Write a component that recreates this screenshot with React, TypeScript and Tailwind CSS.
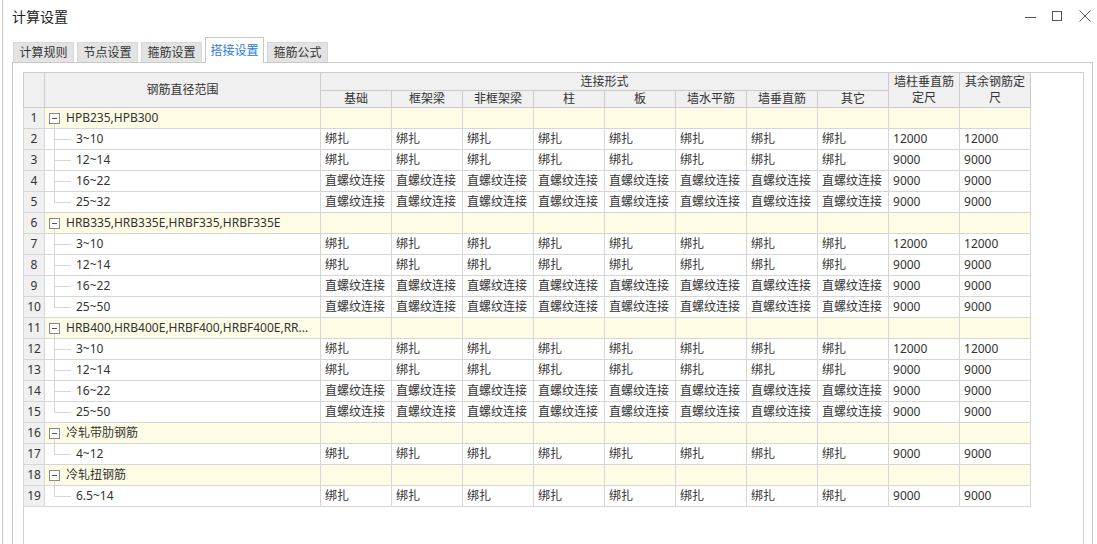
import React from "react";

type Child = { range: string; tie: boolean; a: string; b: string };
type Group = { name: string; children: Child[] };

const groups: Group[] = [
  {
    name: "HPB235,HPB300",
    children: [
      { range: "3~10", tie: true, a: "12000", b: "12000" },
      { range: "12~14", tie: true, a: "9000", b: "9000" },
      { range: "16~22", tie: false, a: "9000", b: "9000" },
      { range: "25~32", tie: false, a: "9000", b: "9000" },
    ],
  },
  {
    name: "HRB335,HRB335E,HRBF335,HRBF335E",
    children: [
      { range: "3~10", tie: true, a: "12000", b: "12000" },
      { range: "12~14", tie: true, a: "9000", b: "9000" },
      { range: "16~22", tie: false, a: "9000", b: "9000" },
      { range: "25~50", tie: false, a: "9000", b: "9000" },
    ],
  },
  {
    name: "HRB400,HRB400E,HRBF400,HRBF400E,RR...",
    children: [
      { range: "3~10", tie: true, a: "12000", b: "12000" },
      { range: "12~14", tie: true, a: "9000", b: "9000" },
      { range: "16~22", tie: false, a: "9000", b: "9000" },
      { range: "25~50", tie: false, a: "9000", b: "9000" },
    ],
  },
  { name: "冷轧带肋钢筋", children: [{ range: "4~12", tie: true, a: "9000", b: "9000" }] },
  { name: "冷轧扭钢筋", children: [{ range: "6.5~14", tie: true, a: "9000", b: "9000" }] },
];

const subCols = ["基础", "框架梁", "非框架梁", "柱", "板", "墙水平筋", "墙垂直筋", "其它"];
const tabs = ["计算规则", "节点设置", "箍筋设置", "搭接设置", "箍筋公式"];

const cell = "border border-[#d6d6d6] px-[4px] text-left font-normal whitespace-nowrap overflow-hidden";
const head = "border border-[#cbcbcb] bg-[#f0f0f0] font-normal text-center leading-[16px] p-0";
const num = "border border-[#d6d6d6] bg-[#f0f0f0] text-center p-0";

export default function App() {
  let n = 0;
  const rows: React.ReactNode[] = [];
  groups.forEach((g, gi) => {
    n++;
    rows.push(
      <tr key={`g${gi}`} className="h-[21px]">
        <td className={num}>{n}</td>
        <td className={`${cell} bg-[#fffce6] relative pl-[21px]`}>
          <span className="absolute left-[4px] top-[5px] w-[11px] h-[11px] border border-[#8a8a8a] bg-white flex items-center justify-center">
            <span className="block w-[5px] h-px bg-[#555]" />
          </span>
          <span className="absolute left-[9px] top-[16px] bottom-0 w-px bg-[#d6d6d6]" />
          {g.name}
        </td>
        {Array.from({ length: 10 }).map((_, i) => (
          <td key={i} className={`${cell} bg-[#fffce6]`} />
        ))}
      </tr>
    );
    g.children.forEach((c, ci) => {
      n++;
      const last = ci === g.children.length - 1;
      rows.push(
        <tr key={`c${gi}-${ci}`} className="h-[21px]">
          <td className={num}>{n}</td>
          <td className={`${cell} relative pl-[31px]`}>
            <span className={`absolute left-[9px] top-0 w-px bg-[#d6d6d6] ${last ? "h-[10px]" : "h-full"}`} />
            <span className="absolute left-[9px] top-[10px] w-[17px] h-px bg-[#d6d6d6]" />
            {c.range}
          </td>
          {subCols.map((s) => (
            <td key={s} className={cell}>
              {c.tie ? "绑扎" : "直螺纹连接"}
            </td>
          ))}
          <td className={cell}>{c.a}</td>
          <td className={cell}>{c.b}</td>
        </tr>
      );
    });
  });

  return (
    <div
      className="w-[1097px] h-[544px] overflow-hidden bg-white text-[#333] relative"
      style={{ fontFamily: '"Noto Sans", "Noto Sans CJK SC", sans-serif' }}
    >
      <div className="ml-[2px] h-full border-l border-[#c9c9c9] flex flex-col">
        {/* title bar */}
        <div className="h-[37px] shrink-0 flex items-start justify-between pl-[9px] pr-[6px]">
          <div className="text-[14px] leading-[20px] mt-[7px] text-[#222]">计算设置</div>
          <div className="flex items-center gap-[16px] mt-[10px]">
            <svg width="11" height="11" viewBox="0 0 11 11">
              <line x1="0" y1="6.5" x2="11" y2="6.5" stroke="#555" strokeWidth="1" />
            </svg>
            <svg width="11" height="11" viewBox="0 0 11 11">
              <rect x="0.5" y="0.5" width="9" height="9" fill="none" stroke="#555" strokeWidth="1" />
            </svg>
            <svg width="12" height="12" viewBox="0 0 12 12">
              <path d="M0.5 0.5 L11.5 11.5 M11.5 0.5 L0.5 11.5" stroke="#555" strokeWidth="1" />
            </svg>
          </div>
        </div>

        {/* tabs */}
        <div className="flex items-end gap-[3px] pl-[10px] h-[25px] shrink-0 relative z-10">
          {tabs.map((t) => {
            const active = t === "搭接设置";
            return (
              <div
                key={t}
                className={
                  active
                    ? "h-[26px] w-[59px] border border-b-0 border-[#c6c6c6] bg-white text-[#2a7ad6] text-[12px] flex items-center justify-center -mb-px pt-[1px]"
                    : "h-[20px] w-[61px] border border-b-0 border-[#d8d8d8] bg-[#e3e3e3] text-[#333] text-[12px] flex items-center justify-center"
                }
              >
                {t}
              </div>
            );
          })}
        </div>

        {/* panel */}
        <div className="ml-[9px] w-[1081px] h-[520px] shrink-0 border border-[#c9c9c9] pt-[9px] pl-[10px] pr-[8px]">
          <div className="h-full border border-[#cfcfcf] border-b-0">
            <table
              className="table-fixed border-collapse text-[12px] leading-[16px] -mt-px -ml-px"
              style={{ width: 1007 }}
            >
              <colgroup>
                <col style={{ width: 21 }} />
                <col style={{ width: 276 }} />
                {Array.from({ length: 10 }).map((_, i) => (
                  <col key={i} style={{ width: 71 }} />
                ))}
              </colgroup>
              <thead>
                <tr className="h-[18px]">
                  <th rowSpan={2} className={head} />
                  <th rowSpan={2} className={head}>钢筋直径范围</th>
                  <th colSpan={8} className={head}>连接形式</th>
                  <th rowSpan={2} className={head}>
                    墙柱垂直筋
                    <br />
                    定尺
                  </th>
                  <th rowSpan={2} className={head}>
                    其余钢筋定
                    <br />
                    尺
                  </th>
                </tr>
                <tr className="h-[17px]">
                  {subCols.map((s) => (
                    <th key={s} className={head}>
                      {s}
                    </th>
                  ))}
                </tr>
              </thead>
              <tbody>{rows}</tbody>
            </table>
          </div>
        </div>
      </div>
    </div>
  );
}
